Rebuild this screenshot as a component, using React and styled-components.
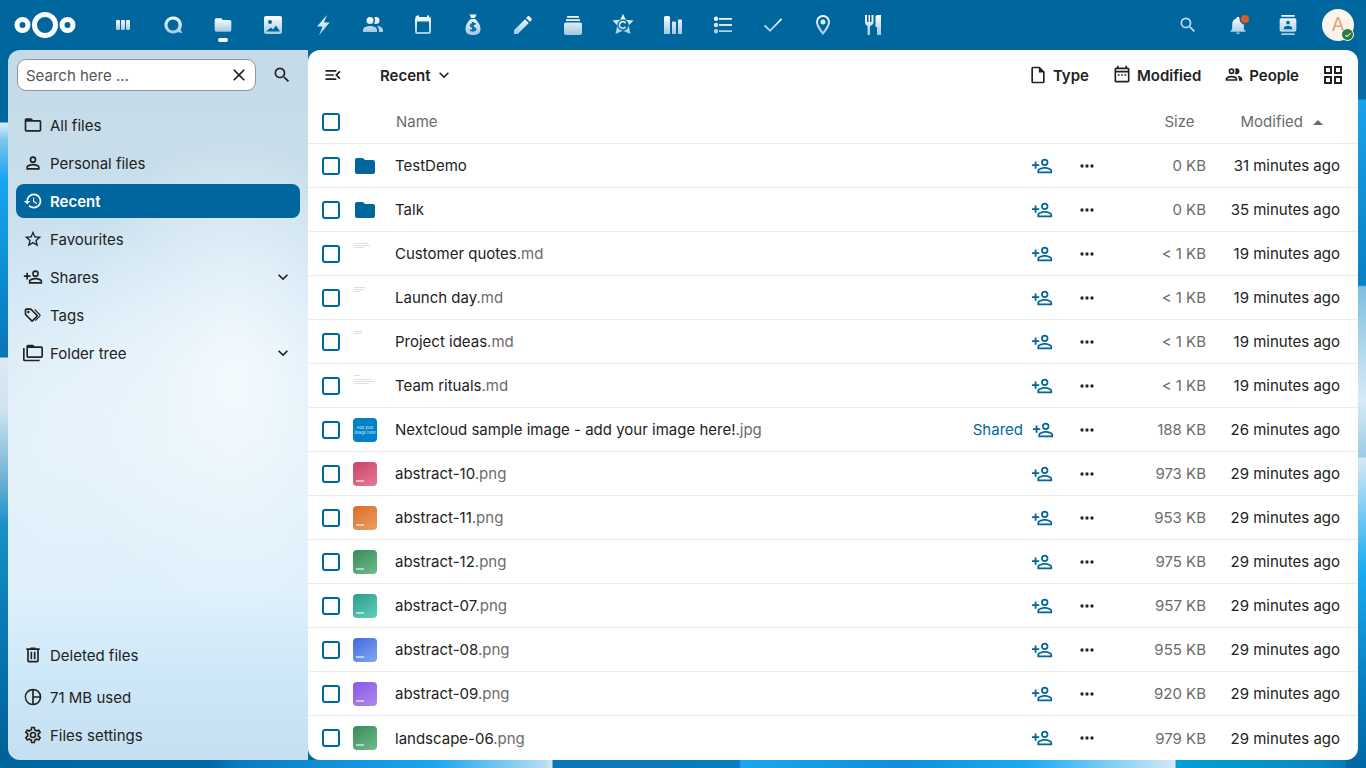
import React, { useId } from 'react';
import styled, { createGlobalStyle } from 'styled-components';

const GlobalStyle = createGlobalStyle`
  html, body { margin: 0; padding: 0; height: 100%; }
  body { font-family: Inter, "Liberation Sans", sans-serif; font-size: 15px; color: #222; }
  * { box-sizing: border-box; }
`;

const PRIMARY = '#00679e';

const mdi = {
  folderOutline: 'M20,18H4V8H20M20,6H12L10,4H4C2.89,4 2,4.89 2,6V18A2,2 0 0,0 4,20H20A2,2 0 0,0 22,18V8C22,6.89 21.1,6 20,6Z',
  folder: 'M10,4H4C2.89,4 2,4.89 2,6V18A2,2 0 0,0 4,20H20A2,2 0 0,0 22,18V8C22,6.89 21.1,6 20,6H12L10,4Z',
  account: 'M12,4A4,4 0 0,1 16,8A4,4 0 0,1 12,12A4,4 0 0,1 8,8A4,4 0 0,1 12,4M12,6A2,2 0 0,0 10,8A2,2 0 0,0 12,10A2,2 0 0,0 14,8A2,2 0 0,0 12,6M12,13C14.67,13 20,14.33 20,17V20H4V17C4,14.33 9.33,13 12,13M12,14.9C9.03,14.9 5.9,16.36 5.9,17V18.1H18.1V17C18.1,16.36 14.97,14.9 12,14.9Z',
  history: 'M13.5,8H12V13L16.28,15.54L17,14.33L13.5,12.25V8M13,3A9,9 0 0,0 4,12H1L4.96,16.03L9,12H6A7,7 0 0,1 13,5A7,7 0 0,1 20,12A7,7 0 0,1 13,19C11.07,19 9.32,18.21 8.06,16.94L6.64,18.36C8.27,20 10.5,21 13,21A9,9 0 0,0 22,12A9,9 0 0,0 13,3Z',
  star: 'M12,15.39L8.24,17.66L9.23,13.38L5.91,10.5L10.29,10.13L12,6.09L13.71,10.13L18.09,10.5L14.77,13.38L15.76,17.66M22,9.24L14.81,8.63L12,2L9.19,8.63L2,9.24L7.45,13.97L5.82,21L12,17.27L18.18,21L16.54,13.97L22,9.24Z',
  accountPlus: 'M15,4A4,4 0 0,0 11,8A4,4 0 0,0 15,12A4,4 0 0,0 19,8A4,4 0 0,0 15,4M15,5.9C16.16,5.9 17.1,6.84 17.1,8C17.1,9.16 16.16,10.1 15,10.1A2.1,2.1 0 0,1 12.9,8A2.1,2.1 0 0,1 15,5.9M4,7V10H1V12H4V15H6V12H9V10H6V7H4M15,13C12.33,13 7,14.33 7,17V20H23V17C23,14.33 17.67,13 15,13M15,14.9C17.97,14.9 21.1,16.36 21.1,17V18.1H8.9V17C8.9,16.36 12,14.9 15,14.9Z',
  tags: 'M6.5 10C7.3 10 8 9.3 8 8.5S7.3 7 6.5 7 5 7.7 5 8.5 5.7 10 6.5 10M9 6L16 13L11 18L4 11V6H9M9 4H4C2.9 4 2 4.9 2 6V11C2 11.6 2.2 12.1 2.6 12.4L9.6 19.4C9.9 19.8 10.4 20 11 20S12.1 19.8 12.4 19.4L17.4 14.4C17.8 14 18 13.5 18 13C18 12.4 17.8 11.9 17.4 11.6L10.4 4.6C10.1 4.2 9.6 4 9 4M13.5 5.7L14.5 4.7L20.6 11C21 11.4 21.2 11.9 21.2 12.4S21 13.4 20.6 13.8L15.2 19.2L14.2 18.2L19.9 12.5L13.5 5.7Z',
  folderMultiple: 'M22,4A2,2 0 0,1 24,6V16A2,2 0 0,1 22,18H6A2,2 0 0,1 4,16V4A2,2 0 0,1 6,2H12L14,4H22M2,6V20H20V22H2A2,2 0 0,1 0,20V6H2M6,6V16H22V6H6Z',
  trash: 'M9,3V4H4V6H5V19A2,2 0 0,0 7,21H17A2,2 0 0,0 19,19V6H20V4H15V3H9M7,6H17V19H7V6M9,8V17H11V8H9M13,8V17H15V8H13Z',
  pie: 'M12,2A10,10 0 1,0 22,12A10,10 0 0,0 12,2M11,4.06V20A8,8 0 0,1 11,4.06M13,4.06A8,8 0 0,1 19.94,11H13V4.06M13,13H19.94A8,8 0 0,1 13,19.94V13Z',
  cog: 'M12,8A4,4 0 0,1 16,12A4,4 0 0,1 12,16A4,4 0 0,1 8,12A4,4 0 0,1 12,8M12,10A2,2 0 0,0 10,12A2,2 0 0,0 12,14A2,2 0 0,0 14,12A2,2 0 0,0 12,10M10,22C9.75,22 9.54,21.82 9.5,21.58L9.13,18.93C8.5,18.68 7.96,18.34 7.44,17.94L4.95,18.95C4.73,19.03 4.46,18.95 4.34,18.73L2.34,15.27C2.21,15.05 2.27,14.78 2.46,14.63L4.57,12.97L4.5,12L4.57,11L2.46,9.37C2.27,9.22 2.21,8.95 2.34,8.73L4.34,5.27C4.46,5.05 4.73,4.96 4.95,5.05L7.44,6.05C7.96,5.66 8.5,5.32 9.13,5.07L9.5,2.42C9.54,2.18 9.75,2 10,2H14C14.25,2 14.46,2.18 14.5,2.42L14.87,5.07C15.5,5.32 16.04,5.66 16.56,6.05L19.05,5.05C19.27,4.96 19.54,5.05 19.66,5.27L21.66,8.73C21.79,8.95 21.73,9.22 21.54,9.37L19.43,11L19.5,12L19.43,13L21.54,14.63C21.73,14.78 21.79,15.05 21.66,15.27L19.66,18.73C19.54,18.95 19.27,19.04 19.05,18.95L16.56,17.95C16.04,18.34 15.5,18.68 14.87,18.93L14.5,21.58C14.46,21.82 14.25,22 14,22H10M11.25,4L10.88,6.61C9.68,6.86 8.62,7.5 7.85,8.39L5.44,7.35L4.69,8.65L6.8,10.2C6.4,11.37 6.4,12.64 6.8,13.8L4.68,15.36L5.43,16.66L7.86,15.62C8.63,16.5 9.68,17.14 10.87,17.38L11.24,20H12.76L13.13,17.39C14.32,17.14 15.37,16.5 16.14,15.62L18.57,16.66L19.32,15.36L17.2,13.81C17.6,12.64 17.6,11.37 17.2,10.2L19.31,8.65L18.56,7.35L16.15,8.39C15.38,7.5 14.32,6.86 13.12,6.62L12.75,4H11.25Z',
  magnify: 'M9.5,3A6.5,6.5 0 0,1 16,9.5C16,11.11 15.41,12.59 14.44,13.73L14.71,14H15.5L20.5,19L19,20.5L14,15.5V14.71L13.73,14.44C12.59,15.41 11.11,16 9.5,16A6.5,6.5 0 0,1 3,9.5A6.5,6.5 0 0,1 9.5,3M9.5,5C7,5 5,7 5,9.5C5,12 7,14 9.5,14C12,14 14,12 14,9.5C14,7 12,5 9.5,5Z',
  close: 'M19,6.41L17.59,5L12,10.59L6.41,5L5,6.41L10.59,12L5,17.59L6.41,19L12,13.41L17.59,19L19,17.59L13.41,12L19,6.41Z',
  chevronDown: 'M7.41,8.58L12,13.17L16.59,8.58L18,10L12,16L6,10L7.41,8.58Z',
  dots: 'M16,12A2,2 0 0,1 18,10A2,2 0 0,1 20,12A2,2 0 0,1 18,14A2,2 0 0,1 16,12M10,12A2,2 0 0,1 12,10A2,2 0 0,1 14,12A2,2 0 0,1 12,14A2,2 0 0,1 10,12M4,12A2,2 0 0,1 6,10A2,2 0 0,1 8,12A2,2 0 0,1 6,14A2,2 0 0,1 4,12Z',
  file: 'M14,2H6A2,2 0 0,0 4,4V20A2,2 0 0,0 6,22H18A2,2 0 0,0 20,20V8L14,2M18,20H6V4H13V9H18V20Z',
  calendar: 'M7 11H9V13H7V11M21 5V19C21 20.11 20.11 21 19 21H5C3.89 21 3 20.1 3 19V5C3 3.9 3.9 3 5 3H6V1H8V3H16V1H18V3H19C20.11 3 21 3.9 21 5M5 7H19V5H5V7M19 19V9H5V19H19M17 13V11H15V13H17M13 13V11H11V13H13Z',
  people: 'M13.07 10.41A5 5 0 0 0 13.07 4.59A3.39 3.39 0 0 1 15 4A3.5 3.5 0 0 1 15 11A3.39 3.39 0 0 1 13.07 10.41M5.5 7.5A3.5 3.5 0 1 1 9 11A3.5 3.5 0 0 1 5.5 7.5M7.5 7.5A1.5 1.5 0 1 0 9 6A1.5 1.5 0 0 0 7.5 7.5M16 17V19H2V17S2 13 9 13 16 17 16 17M14 17C13.86 16.22 12.67 15 9 15S4.07 16.22 4 17M15.95 13A5.32 5.32 0 0 1 18 17V19H22V17S22 13.37 15.94 13Z',
  grid: 'M3 11H11V3H3M5 5H9V9H5M13 21H21V13H13M15 15H19V19H15M3 21H11V13H3M5 15H9V19H5M13 3V11H21V3M19 9H15V5H19Z',
  menuOpen: 'M21,15.61L19.59,17L14.58,12L19.59,7L21,8.39L17.44,12L21,15.61M3,6H16V8H3V6M3,13V11H13V13H3M3,18V16H16V18H3Z',
  menuUp: 'M7,15L12,10L17,15H7Z',
};

const appIcons = {
  dashboard: { size: 24, d: 'M6.2 7h1.6A1.2 1.2 0 0 1 9 8.2v7.6A1.2 1.2 0 0 1 7.8 17H6.2A1.2 1.2 0 0 1 5 15.800V8.200A1.200 1.200 0 0 1 6.200 7zM11.200 7h1.600A1.200 1.200 0 0 1 14 8.200v7.600A1.200 1.200 0 0 1 12.800 17h-1.600A1.200 1.200 0 0 1 10 15.800V8.200A1.200 1.200 0 0 1 11.200 7zM16.200 7h1.600A1.200 1.200 0 0 1 19 8.200v7.600A1.200 1.200 0 0 1 17.800 17h-1.600A1.200 1.200 0 0 1 15 15.800V8.200A1.200 1.200 0 0 1 16.200 7z' },
  talk: { size: 24, d: 'M12 3.500a8.500 8.500 0 1 0 4.900 15.400l4.300 1.400-1.500-4.100A8.500 8.500 0 0 0 12 3.500zm0 3a5.500 5.500 0 1 1 0 11 5.500 5.500 0 0 1 0-11z' },
  files: { size: 20, d: mdi.folder },
  photos: { size: 24, d: 'M5 3h14a2 2 0 0 1 2 2v14a2 2 0 0 1-2 2H5a2 2 0 0 1-2-2V5a2 2 0 0 1 2-2zM9 7a2 2 0 1 0 0 4 2 2 0 0 0 0-4zM5 18.500h14l-4-6-3 4-2-2z' },
  activity: { size: 24, d: 'M16 2L6 13.500h5.500L8 22.500 18.500 9.500H12.800z' },
  contacts: { size: 24, d: 'M16 17V19H2V17S2 13 9 13 16 17 16 17M12.500 7.500A3.500 3.500 0 1 0 9 11A3.500 3.500 0 0 0 12.500 7.500M15.940 13A5.320 5.320 0 0 1 18 17V19H22V17S22 13.370 15.940 13M15 4A3.390 3.390 0 0 0 13.070 4.590A5 5 0 0 1 13.070 10.410A3.390 3.390 0 0 0 15 11A3.500 3.500 0 0 0 15 4Z' },
  calendar: { size: 24, d: 'M6 2.500h2v1.500h8V2.500h2v1.500h1a2 2 0 0 1 2 .000a1 1 0 0 1 .000 .000H4zM6 4h12a2 2 0 0 1 2 2v13a2 2 0 0 1-2 2H6a2 2 0 0 1-2-2V6a2 2 0 0 1 2-2zM6 8.500V19h12V8.500z' },
  money: { size: 24, d: 'M8.500 1.500h7l-1.700 3.500h-3.600zM10 6h4c2.800 2 5.500 6 5.500 10 0 4.500-3 6-7.500 6s-7.500-1.500-7.500-6c0-4 2.700-8 5.500-10z', inner: 'M14.500 11.500c-.8-1-4.700-1.300-4.900.8-.2 2.200 5 1.600 5 3.800 0 2-4.300 1.900-5.300.6M12 9v9.500' },
  notes: { size: 24, d: 'M20.710,7.040C21.100,6.650 21.100,6 20.710,5.630L18.370,3.290C18,2.900 17.350,2.900 16.960,3.290L15.120,5.120L18.870,8.870M3,17.250V21H6.750L17.810,9.930L14.060,6.180L3,17.250Z' },
  deck: { size: 24, d: 'M7 3h10a1 1 0 0 1 1 1v.8H6V4a1 1 0 0 1 1-1zM5 6.300h14V8H5zM4.500 9.500h15a1.500 1.500 0 0 1 1.500 1.500v9a2 2 0 0 1-2 2H5a2 2 0 0 1-2-2v-9a1.500 1.500 0 0 1 1.500-1.500z' },
  cospend: { size: 24, d: 'M12 1L14.800 6.800 22.500 7.500 17.700 12.500 19.500 21 12 17.800 4.500 21 6.300 12.500 1.500 7.500 9.200 6.800zM12 6.300a5.700 5.700 0 1 0 0 11.400 5.700 5.700 0 0 0 0-11.400zM15.300 9.700a4.200 4.200 0 1 0 0 4.600l-1.500-1a2.400 2.400 0 1 1 0-2.600z' },
  analytics: { size: 24, d: 'M4.500 3h3A1.500 1.500 0 0 1 9 4.500V21H3V4.500A1.500 1.500 0 0 1 4.500 3zM11 9.500a1 1 0 0 1 1-1h2a1 1 0 0 1 1 1V21h-4zM17 7.500a1 1 0 0 1 1-1h2a1 1 0 0 1 1 1V21h-4z' },
  tasks: { size: 24, d: 'M8 5h13v1.800H8zM8 11.100h13v1.800H8zM8 17.200h13v1.800H8zM5 3.500a2.200 2.200 0 1 1 0 4.400 2.200 2.200 0 0 1 0-4.400zM5 9.800a2.200 2.200 0 1 1 0 4.400 2.200 2.200 0 0 1 0-4.400zM5 16a2.200 2.200 0 1 1 0 4.400 2.200 2.200 0 0 1 0-4.400z' },
  check: { size: 24, d: 'M20 5.200L21.200 6.500 9 19 3 13 4.200 11.700 9 16.500z' },
  maps: { size: 24, d: 'M12,6.500A2.500,2.500 0 0,1 14.500,9A2.500,2.500 0 0,1 12,11.500A2.500,2.500 0 0,1 9.500,9A2.500,2.500 0 0,1 12,6.500M12,2A7,7 0 0,1 19,9C19,14.250 12,22 12,22C12,22 5,14.250 5,9A7,7 0 0,1 12,2M12,4A5,5 0 0,0 7,9C7,10 7,12 12,18.710C17,12 17,10 17,9A5,5 0 0,0 12,4Z' },
  cookbook: { size: 24, d: 'M10.500,9H9V2H7.500V9H6V2H4V9C4,11.120 5.200,12.840 6.500,12.970V22H9V12.970C10.800,12.840 12.500,11.120 12.500,9V2H10.500V9M14.500,4V14H16V22H20V2H16.500A2,2 0 0,0 14.500,4Z' },
};

const topApps = ['dashboard', 'talk', 'files', 'photos', 'activity', 'contacts', 'calendar', 'money', 'notes', 'deck', 'cospend', 'analytics', 'tasks', 'check', 'maps', 'cookbook'];

const Page = styled.div`
  height: 100vh;
  display: flex;
  flex-direction: column;
  overflow: hidden;
  background:
    linear-gradient(90deg, ${PRIMARY} 0, #006aa5 209px, #0a7cc0 240px, #1ba6f0 435px, #b6dcee 545px, #d6e9f3 552px, #0a78b8 553px, #0a7cc0 739px, #1ca6ee 741px, #0f8fd8 900px, #1aabf2 1028px, #cfe7f4 1172px, #d6ecf6 1175px, #00a0d6 1176px, #0b89c4 1320px, #0a79b8 1345px, #006aa5 1346px) 0 100% / 100% 8px no-repeat,
    linear-gradient(180deg, ${PRIMARY} 0, ${PRIMARY} 122px, #dceef8 123px, #7cc6ef 140px, #1aa6f0 178px, #0a85cc 300px, #0a76b6 357px, #dce9f1 358px, #d0e3ee 410px, #6fb0d5 480px, #1a90c9 525px, #0a7ab6 620px, #005f95 768px) 0 0 / 8px 100% no-repeat,
    linear-gradient(180deg, ${PRIMARY} 0, #0a6aa5 99px, #1aa2ea 100px, #0a7fc4 285px, #7fbfdf 287px, #d8ebf5 400px, #9ccbe4 457px, #d5e9f5 458px, #1aabf2 570px, #0a80c2 680px, #0068a6 768px) 100% 0 / 8px 100% no-repeat,
    ${PRIMARY};
`;

const TopBar = styled.header`
  height: 50px;
  flex: none;
  display: flex;
  align-items: center;
`;

const Logo = styled.svg`
  width: 90px;
  height: 50px;
  flex: none;
  display: block;
`;

const AppMenu = styled.nav`
  display: flex;
  margin-left: 8px;
  flex: 1;
`;

const AppItem = styled.div`
  position: relative;
  width: 50px;
  height: 50px;
  display: flex;
  align-items: center;
  justify-content: center;
  ${p => p.$active && `
    &::after {
      content: '';
      position: absolute;
      left: 20px;
      bottom: 8px;
      width: 10px;
      height: 4px;
      border-radius: 2px;
      background: #fff;
    }
  `}
`;

const HeaderRight = styled.div`
  display: flex;
  align-items: center;
  padding-right: 12px;
`;

const HeaderButton = styled.div`
  position: relative;
  width: 50px;
  height: 50px;
  display: flex;
  align-items: center;
  justify-content: center;
`;

const NotifyDot = styled.span`
  position: absolute;
  left: 28px;
  top: 15px;
  width: 8px;
  height: 8px;
  border-radius: 50%;
  background: #dd5b26;
  box-shadow: 0 0 0 1.5px ${PRIMARY};
`;

const Avatar = styled.div`
  position: relative;
  width: 32px;
  height: 32px;
  margin-left: 9px;
  border-radius: 50%;
  background: #fbf3ed;
  color: #e0a67c;
  font-size: 19px;
  line-height: 32px;
  text-align: center;
`;

const StatusBadge = styled.span`
  position: absolute;
  right: 0;
  bottom: 0;
  width: 13px;
  height: 13px;
  border-radius: 50%;
  background: #2d7b41;
  border: 1.5px solid #fff;
  display: flex;
  align-items: center;
  justify-content: center;
`;

const Content = styled.div`
  flex: 1;
  min-height: 0;
  display: flex;
  padding: 0 8px 8px;
`;

const Sidebar = styled.aside`
  width: 300px;
  flex: none;
  display: flex;
  flex-direction: column;
  border-radius: 12px 0 0 12px;
  background:
    radial-gradient(170px 240px at 225px 330px, rgba(246, 252, 255, 0.95), rgba(246, 252, 255, 0) 100%),
    radial-gradient(150px 200px at 60px 360px, rgba(235, 246, 252, 0.8), rgba(235, 246, 252, 0) 100%),
    linear-gradient(180deg, #c5dae8 0, #c9deeb 120px, #cce3f3 240px, #dcedf8 400px, #def0fb 540px, #cfe8f9 620px, #c6dff0 710px);
`;

const SearchRow = styled.div`
  display: flex;
  align-items: center;
  padding: 9px 0 0 9px;
`;

const SearchBox = styled.div`
  width: 240px;
  height: 32px;
  display: flex;
  align-items: center;
  justify-content: space-between;
  padding: 0 6px 0 8px;
  border: 1px solid #949494;
  border-radius: 9px;
  background: #fff;
  color: #555;
`;

const SearchGo = styled.div`
  width: 52px;
  display: flex;
  justify-content: center;
`;

const NavList = styled.nav`
  display: flex;
  flex-direction: column;
  gap: 4px;
  padding: 0 8px;
  margin-top: ${p => p.$top || 0}px;
`;

const NavItem = styled.div`
  height: 34px;
  display: flex;
  align-items: center;
  gap: 7px;
  padding-left: 7px;
  border-radius: 8px;
  color: ${p => (p.$active ? '#fff' : '#222')};
  font-weight: ${p => (p.$active ? 600 : 400)};
  background: ${p => (p.$active ? PRIMARY : 'transparent')};
`;

const NavLabel = styled.span`
  flex: 1;
`;

const NavChevron = styled.span`
  display: flex;
  margin-right: 7px;
`;

const SidebarFoot = styled.div`
  margin-top: auto;
  padding-bottom: 8px;
  display: flex;
  flex-direction: column;
  gap: 8px;
`;

const Main = styled.main`
  flex: 1;
  min-width: 0;
  display: flex;
  flex-direction: column;
  overflow: hidden;
  border-radius: 12px;
  background: #fff;
`;

const Toolbar = styled.div`
  height: 50px;
  flex: none;
  display: flex;
  align-items: center;
  padding: 0 13px 0 15px;
`;

const Crumb = styled.div`
  display: flex;
  align-items: center;
  gap: 3px;
  margin-left: 37px;
  font-weight: 600;
  flex: 1;
`;

const Filters = styled.div`
  display: flex;
  align-items: center;
  gap: 23px;
`;

const Filter = styled.div`
  display: flex;
  align-items: center;
  gap: 5px;
  font-weight: 600;
`;

const ViewToggle = styled.div`
  display: flex;
  margin-left: 22px;
`;

const HeadRow = styled.div`
  height: 44px;
  flex: none;
  display: flex;
  align-items: center;
  padding: 0 28px 0 14px;
  border-bottom: 1px solid #ededed;
  color: #6b6b6b;
`;

const HeadName = styled.div`
  flex: 1;
  margin-left: 56px;
`;

const HeadModified = styled.div`
  display: flex;
  align-items: center;
  gap: 3px;
  margin-left: 46px;
`;

const Row = styled.div`
  height: 44px;
  flex: none;
  display: flex;
  align-items: center;
  padding: 0 18px 0 14px;
  border-bottom: 1px solid #ededed;
  &:last-child { border-bottom: 0; }
`;

const Check = styled.span`
  width: 18px;
  height: 18px;
  flex: none;
  border: 2px solid ${PRIMARY};
  border-radius: 3px;
  background: #fff;
`;

const Preview = styled.div`
  width: 24px;
  height: 24px;
  flex: none;
  margin: 0 18px 0 13px;
`;

const Thumb = styled.div`
  position: relative;
  width: 24px;
  height: 24px;
  border-radius: 4px;
  background: linear-gradient(145deg, ${p => p.$from}, ${p => p.$to});
  &::after {
    content: '';
    position: absolute;
    left: 3px;
    bottom: 4px;
    width: 8px;
    height: 2px;
    background: rgba(255, 255, 255, 0.55);
  }
`;

const SampleThumb = styled.div`
  width: 24px;
  height: 24px;
  border-radius: 4px;
  background: #0082c9;
  color: #d5edfa;
  font-size: 4px;
  line-height: 5px;
  text-align: center;
  display: flex;
  align-items: center;
  justify-content: center;
`;

const DocThumb = styled.div`
  display: flex;
  flex-direction: column;
  gap: 1px;
  padding: 1px 0 0 1px;
`;

const DocLine = styled.span`
  height: 1px;
  width: ${p => p.$w}px;
  background: ${p => (p.$blank ? 'transparent' : '#dedede')};
`;

const Name = styled.div`
  flex: 1;
  min-width: 0;
  white-space: nowrap;
  color: #222;
`;

const Ext = styled.span`
  color: #6b6b6b;
`;

const SharedLabel = styled.span`
  color: ${PRIMARY};
  margin-right: 8px;
`;

const ShareIcon = styled.span`
  width: 22px;
  display: flex;
  justify-content: center;
  ${p => p.$shift && 'margin: 0 -1px 0 1px;'}
`;

const Dots = styled.span`
  width: 24px;
  margin-left: 22px;
  display: flex;
  justify-content: center;
`;

const Size = styled.div`
  width: 107px;
  text-align: right;
  color: #6b6b6b;
`;

const When = styled.div`
  width: 134px;
  text-align: right;
  color: #222;
`;

const Icon = ({ d, size = 20, color = 'currentColor' }) => (
  <svg width={size} height={size} viewBox="0 0 24 24" style={{ display: 'block', flex: 'none' }}>
    <path d={d} fill={color} fillRule="evenodd" />
  </svg>
);

// header icons fade from white to a pale blue
const GradientIcon = ({ d, inner, size = 24 }) => {
  const id = useId();
  return (
    <svg width={size} height={size} viewBox="0 0 24 24" style={{ display: 'block' }}>
      <defs>
        <linearGradient id={id} x1="0" y1="0" x2="0" y2="1">
          <stop offset="0" stopColor="#ffffff" />
          <stop offset="1" stopColor="#9fc9e3" />
        </linearGradient>
      </defs>
      <path d={d} fill={`url(#${id})`} fillRule="evenodd" />
      {inner && <path d={inner} fill="none" stroke={PRIMARY} strokeWidth="1.7" />}
    </svg>
  );
};

const thumbs = {
  pink: ['#c9436a', '#e67a95'],
  orange: ['#dc6d2a', '#ec9e62'],
  green: ['#37895a', '#70bd8c'],
  teal: ['#2a9d8c', '#62cfba'],
  blue: ['#4469e0', '#7fa8ef'],
  purple: ['#8858e6', '#ae8af0'],
};

const docs = {
  quotes: [14, 16, 10],
  launch: [11, 10, 6],
  ideas: [8, 8],
  rituals: [6, 0, 17, 20, 15],
};

const rows = [
  { name: 'TestDemo', kind: 'folder', size: '0 KB', when: '31 minutes ago' },
  { name: 'Talk', kind: 'folder', size: '0 KB', when: '35 minutes ago' },
  { name: 'Customer quotes', ext: '.md', doc: 'quotes', size: '< 1 KB', when: '19 minutes ago' },
  { name: 'Launch day', ext: '.md', doc: 'launch', size: '< 1 KB', when: '19 minutes ago' },
  { name: 'Project ideas', ext: '.md', doc: 'ideas', size: '< 1 KB', when: '19 minutes ago' },
  { name: 'Team rituals', ext: '.md', doc: 'rituals', size: '< 1 KB', when: '19 minutes ago' },
  { name: 'Nextcloud sample image - add your image here!', ext: '.jpg', kind: 'sample', shared: true, size: '188 KB', when: '26 minutes ago' },
  { name: 'abstract-10', ext: '.png', thumb: 'pink', size: '973 KB', when: '29 minutes ago' },
  { name: 'abstract-11', ext: '.png', thumb: 'orange', size: '953 KB', when: '29 minutes ago' },
  { name: 'abstract-12', ext: '.png', thumb: 'green', size: '975 KB', when: '29 minutes ago' },
  { name: 'abstract-07', ext: '.png', thumb: 'teal', size: '957 KB', when: '29 minutes ago' },
  { name: 'abstract-08', ext: '.png', thumb: 'blue', size: '955 KB', when: '29 minutes ago' },
  { name: 'abstract-09', ext: '.png', thumb: 'purple', size: '920 KB', when: '29 minutes ago' },
  { name: 'landscape-06', ext: '.png', thumb: 'green', size: '979 KB', when: '29 minutes ago' },
];

const navItems = [
  { label: 'All files', icon: mdi.folderOutline },
  { label: 'Personal files', icon: mdi.account },
  { label: 'Recent', icon: mdi.history, active: true },
  { label: 'Favourites', icon: mdi.star },
  { label: 'Shares', icon: mdi.accountPlus, more: true },
  { label: 'Tags', icon: mdi.tags },
  { label: 'Folder tree', icon: mdi.folderMultiple, more: true },
];

function FilePreview({ row }) {
  if (row.kind === 'folder') return <Icon d={mdi.folder} size={24} color={PRIMARY} />;
  if (row.kind === 'sample') return <SampleThumb>Add your image here</SampleThumb>;
  if (row.doc) {
    return (
      <DocThumb>
        {docs[row.doc].map((w, i) => <DocLine key={i} $w={w || 1} $blank={!w} />)}
      </DocThumb>
    );
  }
  const [from, to] = thumbs[row.thumb];
  return <Thumb $from={from} $to={to} />;
}

function FileRow({ row }) {
  return (
    <Row>
      <Check />
      <Preview><FilePreview row={row} /></Preview>
      <Name>{row.name}{row.ext && <Ext>{row.ext}</Ext>}</Name>
      {row.shared && <SharedLabel>Shared</SharedLabel>}
      <ShareIcon $shift={row.shared}><Icon d={mdi.accountPlus} size={22} color={PRIMARY} /></ShareIcon>
      <Dots><Icon d={mdi.dots} size={20} color="#222" /></Dots>
      <Size>{row.size}</Size>
      <When>{row.when}</When>
    </Row>
  );
}

export default function App() {
  return (
    <Page>
      <GlobalStyle />
      <TopBar>
        <Logo viewBox="0 0 90 50">
          <g fill="none" stroke="#fff" strokeWidth="5">
            <circle cx="45" cy="25" r="10.500" />
            <circle cx="22.500" cy="25" r="5.500" />
            <circle cx="67.500" cy="25" r="5.500" />
          </g>
        </Logo>
        <AppMenu>
          {topApps.map(a => (
            <AppItem key={a} $active={a === 'files'}>
              <GradientIcon {...appIcons[a]} />
            </AppItem>
          ))}
        </AppMenu>
        <HeaderRight>
          <HeaderButton><Icon d={mdi.magnify} size={20} color="#c3dcec" /></HeaderButton>
          <HeaderButton>
            <GradientIcon size={20} d="M21,19V20H3V19L5,17V11C5,7.900 7.030,5.170 10,4.290C10,4.190 10,4.100 10,4A2,2 0 0,1 12,2A2,2 0 0,1 14,4C14,4.100 14,4.190 14,4.290C16.970,5.170 19,7.900 19,11V17L21,19M14,21A2,2 0 0,1 12,23A2,2 0 0,1 10,21" />
            <NotifyDot />
          </HeaderButton>
          <HeaderButton>
            <GradientIcon size={20} d="M20,0H4V2H20V0M4,24H20V22H4V24M20,4H4C2.900,4 2,4.900 2,6V18A2,2 0 0,0 4,20H20A2,2 0 0,0 22,18V6A2,2 0 0,0 20,4M12,6.750A2.250,2.250 0 0,1 14.250,9A2.250,2.250 0 0,1 12,11.250A2.250,2.250 0 0,1 9.750,9A2.250,2.250 0 0,1 12,6.750M17,17H7V15.500C7,13.830 10.330,13 12,13C13.670,13 17,13.830 17,15.500V17Z" />
          </HeaderButton>
          <Avatar>
            A
            <StatusBadge>
              <svg width="8" height="8" viewBox="0 0 24 24" style={{ display: 'block' }}>
                <path d="M21,7L9,19L3.500,13.500L5.500,11.500L9,15L19,5Z" fill="#fff" />
              </svg>
            </StatusBadge>
          </Avatar>
        </HeaderRight>
      </TopBar>
      <Content>
        <Sidebar>
          <SearchRow>
            <SearchBox>
              Search here ...
              <Icon d={mdi.close} size={20} color="#222" />
            </SearchBox>
            <SearchGo><Icon d={mdi.magnify} size={20} color="#222" /></SearchGo>
          </SearchRow>
          <NavList $top={17}>
            {navItems.map(item => (
              <NavItem key={item.label} $active={item.active}>
                <Icon d={item.icon} />
                <NavLabel>{item.label}</NavLabel>
                {item.more && <NavChevron><Icon d={mdi.chevronDown} /></NavChevron>}
              </NavItem>
            ))}
          </NavList>
          <SidebarFoot>
            <NavList>
              <NavItem><Icon d={mdi.trash} /><NavLabel>Deleted files</NavLabel></NavItem>
            </NavList>
            <NavList>
              <NavItem><Icon d={mdi.pie} /><NavLabel>71 MB used</NavLabel></NavItem>
              <NavItem><Icon d={mdi.cog} /><NavLabel>Files settings</NavLabel></NavItem>
            </NavList>
          </SidebarFoot>
        </Sidebar>
        <Main>
          <Toolbar>
            <Icon d={mdi.menuOpen} />
            <Crumb>Recent <Icon d={mdi.chevronDown} /></Crumb>
            <Filters>
              <Filter><Icon d={mdi.file} />Type</Filter>
              <Filter><Icon d={mdi.calendar} />Modified</Filter>
              <Filter><Icon d={mdi.people} />People</Filter>
            </Filters>
            <ViewToggle><Icon d={mdi.grid} size={24} /></ViewToggle>
          </Toolbar>
          <HeadRow>
            <Check />
            <HeadName>Name</HeadName>
            <span>Size</span>
            <HeadModified>Modified <Icon d={mdi.menuUp} size={24} color="#6b6b6b" /></HeadModified>
          </HeadRow>
          {rows.map(row => <FileRow key={row.name} row={row} />)}
        </Main>
      </Content>
    </Page>
  );
}
